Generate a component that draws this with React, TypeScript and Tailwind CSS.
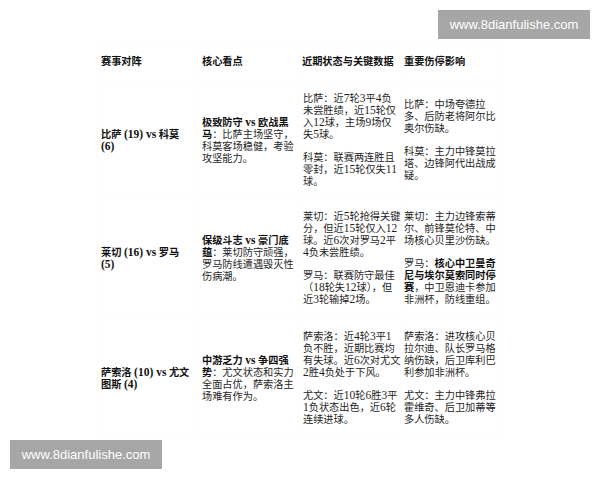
import React from "react";

type Row = {
  match: string[];
  focus: string[];
  form: string[][];
  injury: string[][];
  height: string;
};

const rows: Row[] = [
  {
    match: ["比萨 (19) vs 科莫", "(6)"],
    focus: ["**极致防守 vs 欧战黑**", "**马**：比萨主场坚守，", "科莫客场稳健，考验", "攻坚能力。"],
    form: [
      ["比萨：近7轮3平4负", "未尝胜绩，近15轮仅", "入12球，主场9场仅", "失5球。"],
      ["科莫：联赛两连胜且", "零封，近15轮仅失11", "球。"],
    ],
    injury: [
      ["比萨：中场夸德拉", "多、后防老将阿尔比", "奥尔伤缺。"],
      ["科莫：主力中锋莫拉", "塔、边锋阿代出战成", "疑。"],
    ],
    height: "h-[116px]",
  },
  {
    match: ["莱切 (16) vs 罗马", "(5)"],
    focus: ["**保级斗志 vs 豪门底**", "**蕴**：莱切防守顽强，", "罗马防线遭遇毁灭性", "伤病潮。"],
    form: [
      ["莱切：近5轮抢得关键", "分，但近15轮仅入12", "球。近6次对罗马2平", "4负未尝胜绩。"],
      ["罗马：联赛防守最佳", "（18轮失12球），但", "近3轮输掉2场。"],
    ],
    injury: [
      ["莱切：主力边锋索蒂", "尔、前锋莫伦特、中", "场核心贝里沙伤缺。"],
      ["罗马：**核心中卫曼奇**", "**尼与埃尔莫索同时停**", "**赛**，中卫恩迪卡参加", "非洲杯，防线重组。"],
    ],
    height: "h-[120px]",
  },
  {
    match: ["萨索洛 (10) vs 尤文", "图斯 (4)"],
    focus: ["**中游乏力 vs 争四强**", "**势**：尤文状态和实力", "全面占优，萨索洛主", "场难有作为。"],
    form: [
      ["萨索洛：近4轮3平1", "负不胜，近期比赛均", "有失球。近6次对尤文", "2胜4负处于下风。"],
      ["尤文：近10轮6胜3平", "1负状态出色，近6轮", "连续进球。"],
    ],
    injury: [
      ["萨索洛：进攻核心贝", "拉尔迪、队长罗马格", "纳伤缺，后卫库利巴", "利参加非洲杯。"],
      ["尤文：主力中锋弗拉", "霍维奇、后卫加蒂等", "多人伤缺。"],
    ],
    height: "h-[120px]",
  },
];

// latin runs (digits, "vs", brackets) sit a touch larger than the CJK text
function Latin({ text }: { text: string }) {
  const bits = text.split(/([A-Za-z0-9()]+(?: [A-Za-z0-9()]+)*)/);
  return (
    <>
      {bits.map((b, i) =>
        i % 2 === 1 ? (
          <span key={i} className="text-[11.5px] leading-[10px]">
            {b}
          </span>
        ) : (
          <React.Fragment key={i}>{b}</React.Fragment>
        )
      )}
    </>
  );
}

// "**x**" marks bold runs inside a line
function Line({ text }: { text: string }) {
  const parts = text.split("**");
  return (
    <div className="whitespace-nowrap">
      {parts.map((p, i) =>
        i % 2 === 1 ? (
          <b key={i} className="font-bold text-[#111]">
            <Latin text={p} />
          </b>
        ) : (
          <span key={i}>
            <Latin text={p} />
          </span>
        )
      )}
    </div>
  );
}

function Lines({ lines }: { lines: string[] }) {
  return (
    <div>
      {lines.map((l, i) => (
        <Line key={i} text={l} />
      ))}
    </div>
  );
}

function Paras({ paras }: { paras: string[][] }) {
  return (
    <div className="flex flex-col gap-[11px]">
      {paras.map((p, i) => (
        <Lines key={i} lines={p} />
      ))}
    </div>
  );
}

const cell = "border border-[#fcfcfc] align-middle pl-[3px] pr-[1px]";

export default function App() {
  return (
    <div
      className="relative w-[600px] h-[480px] overflow-hidden bg-white text-[#1e1e1e] text-[10.2px] leading-[12px]"
      style={{ fontFamily: '"Liberation Serif", "Noto Sans CJK SC", serif' }}
    >
      <div className="pt-[40px] pl-[97px]">
        <table className="border-collapse table-fixed w-[400px]">
          <colgroup>
            <col className="w-[101px]" />
            <col className="w-[100px]" />
            <col className="w-[102px]" />
            <col className="w-[97px]" />
          </colgroup>
          <thead>
            <tr className="h-[42px] font-bold text-[#111]">
              <th className={`${cell} text-left`}>赛事对阵</th>
              <th className={`${cell} text-left`}>核心看点</th>
              <th className={`${cell} text-left`}>近期状态与关键数据</th>
              <th className={`${cell} text-left`}>重要伤停影响</th>
            </tr>
          </thead>
          <tbody>
            {rows.map((r, i) => (
              <tr key={i} className={r.height}>
                <td className={`${cell} font-bold text-[#111]`}>
                  <Lines lines={r.match} />
                </td>
                <td className={cell}>
                  <Lines lines={r.focus} />
                </td>
                <td className={`${cell} pl-[4px]`}>
                  <Paras paras={r.form} />
                </td>
                <td className={cell}>
                  <Paras paras={r.injury} />
                </td>
              </tr>
            ))}
          </tbody>
        </table>
      </div>

      <div
        className="absolute left-[438px] top-[10px] w-[152px] h-[29px] bg-[#a6a6a6] text-white text-[13px] flex items-center justify-center"
        style={{ fontFamily: '"Liberation Sans", sans-serif' }}
      >
        www.8dianfulishe.com
      </div>
      <div
        className="absolute left-[10px] top-[440px] w-[152px] h-[29px] bg-[#a6a6a6] text-white text-[13px] flex items-center justify-center"
        style={{ fontFamily: '"Liberation Sans", sans-serif' }}
      >
        www.8dianfulishe.com
      </div>
    </div>
  );
}
